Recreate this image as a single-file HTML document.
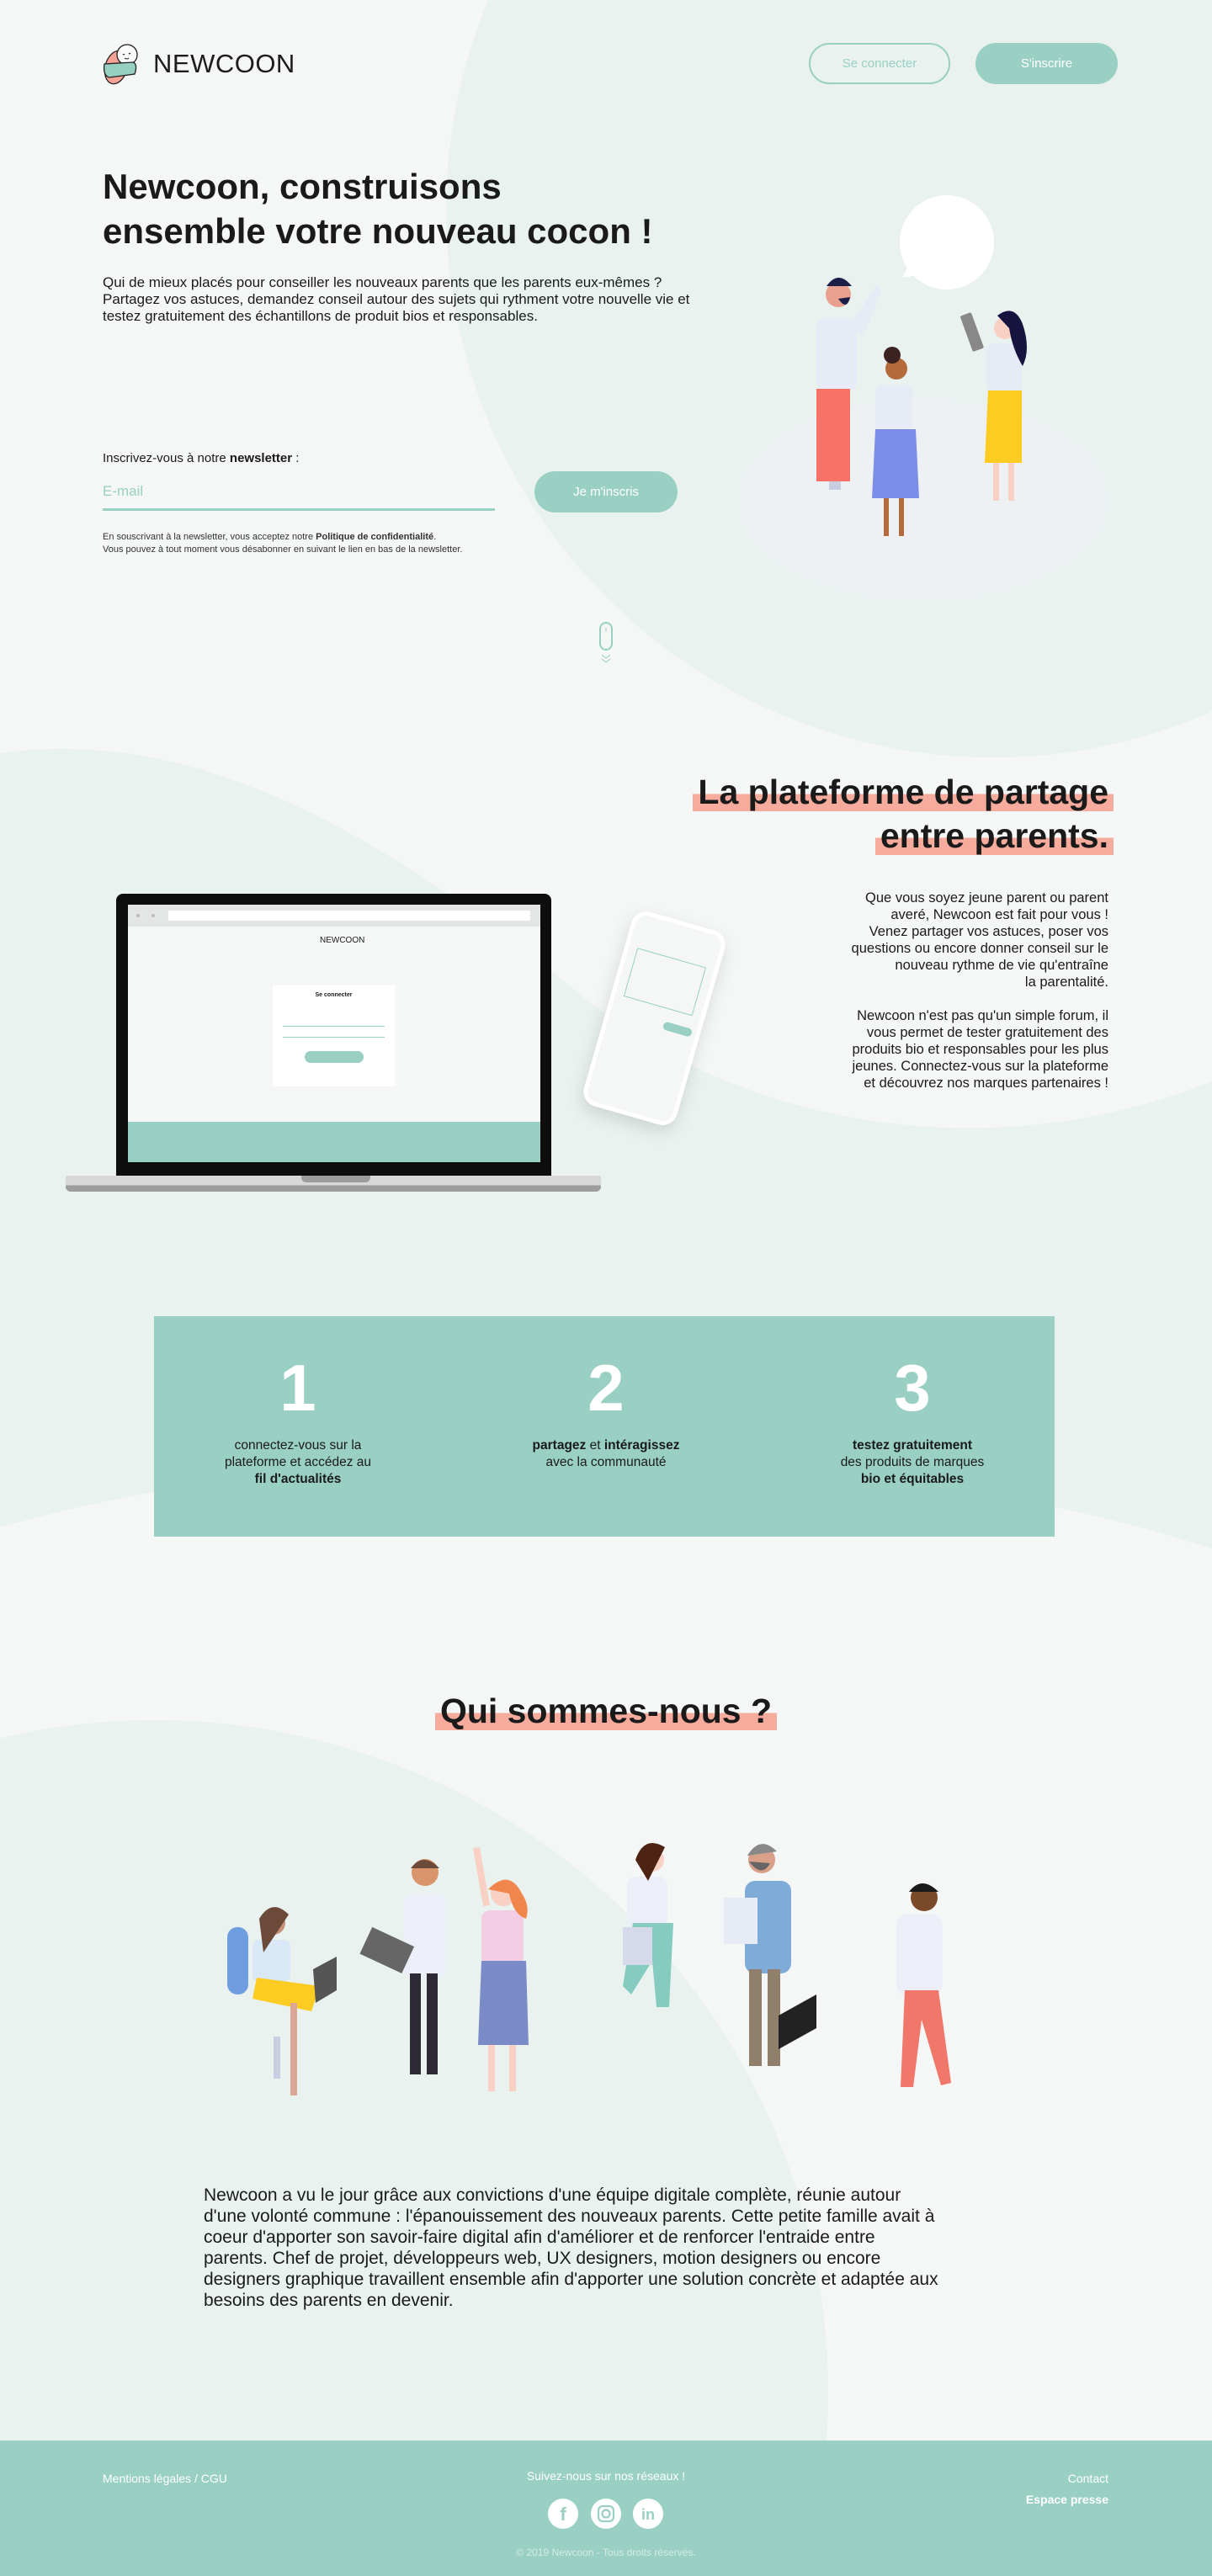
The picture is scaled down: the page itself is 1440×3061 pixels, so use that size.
<!DOCTYPE html>
<html><head><meta charset="utf-8"><style>
*{margin:0;padding:0;box-sizing:border-box}
html{overflow:hidden}
body{width:1440px;height:3061px;position:relative;background:#f4f7f6;font-family:"Liberation Sans",sans-serif;color:#1a1a1a;overflow:hidden}
.a{position:absolute}
.btn{position:absolute;border-radius:25px;display:flex;align-items:center;justify-content:center;font-size:15px}
.hl{background:linear-gradient(transparent 55%,#f6ab9c 55%,#f6ab9c 100%);padding:0 6px}
p{margin:0}
</style></head><body>
<svg class="a" style="left:0;top:0" width="1440" height="3061">
<circle cx="1180" cy="250" r="650" fill="#e9f2ee"/>
<path d="M0,895 C250,860 480,1010 700,1190 C860,1320 1150,1400 1440,1285 L1440,1840 C1000,1700 400,1700 0,1815 Z" fill="#e9f2ee"/>
<circle cx="184" cy="2844" r="800" fill="#e9f2ee"/>
</svg>

<!-- header -->
<svg class="a" style="left:120px;top:50px" width="52" height="52" viewBox="0 0 52 52">
<ellipse cx="18" cy="30" rx="13" ry="20" fill="#f4a396" stroke="#222" stroke-width="1.3" transform="rotate(15 18 30)"/>
<circle cx="31" cy="15" r="12" fill="#fafafa" stroke="#222" stroke-width="1.3"/>
<path d="M26 14 q1 2 2 0 M33 13 q1 2 2 0 M28 19 q3 2 5 0" stroke="#222" fill="none" stroke-width="1"/>
<path d="M4 26 L38 24 Q44 26 40 38 L10 42 Q2 40 4 26Z" fill="#96d0c1" stroke="#222" stroke-width="1.3"/>
</svg>
<div class="a" style="left:182px;top:58px;font-size:31px;font-weight:500;letter-spacing:.5px;color:#1c1c1c">NEWCOON</div>
<div class="btn" style="left:961px;top:51px;width:168px;height:49px;border:2px solid #99d0c3;color:#99d0c3">Se connecter</div>
<div class="btn" style="left:1159px;top:51px;width:169px;height:49px;background:#99d0c3;color:#fff">S'inscrire</div>

<!-- hero -->
<div class="a" style="left:122px;top:195px;font-size:42px;font-weight:bold;line-height:53px">Newcoon, construisons<br>ensemble votre nouveau cocon !</div>
<div class="a" style="left:122px;top:326px;font-size:17px;line-height:20px;width:860px">Qui de mieux placés pour conseiller les nouveaux parents que les parents eux-mêmes ?<br>Partagez vos astuces, demandez conseil autour des sujets qui rythment votre nouvelle vie et<br>testez gratuitement des échantillons de produit bios et responsables.</div>
<div class="a" style="left:122px;top:536px;font-size:15px">Inscrivez-vous à notre <b>newsletter</b> :</div>
<div class="a" style="left:122px;top:574px;font-size:17px;color:#99d0c3">E-mail</div>
<div class="a" style="left:122px;top:604px;width:466px;height:3px;background:#99d0c3"></div>
<div class="btn" style="left:635px;top:560px;width:170px;height:49px;background:#99d0c3;color:#fff">Je m'inscris</div>
<div class="a" style="left:122px;top:631px;font-size:11px;line-height:15px;color:#333">En souscrivant à la newsletter, vous acceptez notre <b>Politique de confidentialité</b>.<br>Vous pouvez à tout moment vous désabonner en suivant le lien en bas de la newsletter.</div>
<svg class="a" style="left:706px;top:738px" width="28" height="56"><rect x="7" y="2" width="14" height="32" rx="7" fill="none" stroke="#99d0c3" stroke-width="2"/><line x1="14" y1="8" x2="14" y2="13" stroke="#99d0c3"/><path d="M9 40 l5 4 l5 -4 M9 45 l5 4 l5 -4" stroke="#99d0c3" fill="none"/></svg>

<!-- hero illustration -->
<svg class="a" style="left:860px;top:230px" width="480" height="500" viewBox="860 230 480 500">
<ellipse cx="1097" cy="594" rx="220" ry="120" fill="#edf1f4"/>
<circle cx="1125" cy="288" r="56" fill="#fff"/><path d="M1072 330 L1085 305 L1100 325Z" fill="#fff"/>
<rect x="970" y="377" width="48" height="88" rx="12" fill="#e6ebf5"/>
<path d="M1012 385 L1040 340 L1048 345 L1025 400Z" fill="#e6ebf5"/>
<rect x="970" y="462" width="40" height="110" fill="#f87365"/>
<rect x="985" y="572" width="14" height="10" fill="#c8cde0"/>
<circle cx="996" cy="350" r="15" fill="#e9a08f"/><path d="M982 340 q14 -20 30 0 z" fill="#1d1d4a"/><path d="M996 355 q10 15 14 -2 z" fill="#1d1d4a"/>
<rect x="1040" y="457" width="44" height="58" rx="10" fill="#e6ebf5"/>
<path d="M1040 510 L1088 510 L1092 592 L1036 592Z" fill="#7b8ee8"/>
<rect x="1050" y="592" width="6" height="45" fill="#b46a3a"/><rect x="1068" y="592" width="6" height="45" fill="#b46a3a"/>
<circle cx="1065" cy="438" r="13" fill="#b46a3a"/><circle cx="1060" cy="422" r="10" fill="#3d2222"/>
<rect x="1172" y="408" width="42" height="60" rx="10" fill="#e6ebf5"/>
<path d="M1174 464 L1214 464 L1214 550 L1170 550Z" fill="#fdcc22"/>
<rect x="1180" y="550" width="7" height="45" fill="#f8d0c4"/><rect x="1198" y="550" width="7" height="45" fill="#f8d0c4"/>
<circle cx="1194" cy="390" r="13" fill="#f8d0c4"/><path d="M1185 375 q20 -15 30 10 q10 30 0 50 q-12 -20 -16 -45 z" fill="#16143f"/>
<rect x="1148" y="372" width="14" height="45" rx="2" fill="#888" transform="rotate(-20 1155 395)"/>
</svg>

<!-- section 2 -->
<div class="a" style="right:117px;top:915px;font-size:41px;font-weight:bold;line-height:52px;text-align:right;width:700px"><span class="hl">La plateforme de partage</span><br><span class="hl">entre parents.</span></div>
<div class="a" style="right:123px;top:1057px;width:420px;text-align:right;font-size:16.5px;line-height:20px">Que vous soyez jeune parent ou parent<br>averé, Newcoon est fait pour vous !<br>Venez partager vos astuces, poser vos<br>questions ou encore donner conseil sur le<br>nouveau rythme de vie qu'entraîne<br>la parentalité.<br><br>Newcoon n'est pas qu'un simple forum, il<br>vous permet de tester gratuitement des<br>produits bio et responsables pour les plus<br>jeunes. Connectez-vous sur la plateforme<br>et découvrez nos marques partenaires !</div>

<!-- laptop -->
<div class="a" style="left:138px;top:1062px;width:517px;height:336px;background:#0d0d0d;border-radius:8px 8px 0 0"></div>
<div class="a" style="left:152px;top:1075px;width:490px;height:306px;background:#f4f7f6"></div>
<div class="a" style="left:152px;top:1075px;width:490px;height:26px;background:#e4e6e6"></div>
<div class="a" style="left:200px;top:1082px;width:430px;height:12px;background:#fff"></div>
<div class="a" style="left:162px;top:1086px;width:22px;height:4px;border-left:4px dotted #bbb;border-right:4px dotted #bbb"></div>
<div class="a" style="left:380px;top:1112px;font-size:10px">NEWCOON</div>
<div class="a" style="left:324px;top:1171px;width:145px;height:120px;background:#fff;font-size:7px;text-align:center;padding-top:8px"><b>Se connecter</b>
<div style="margin:25px 12px 0;border-bottom:1px solid #99d0c3;height:9px"></div><div style="margin:12px 12px 0;border-bottom:1px solid #99d0c3;height:0"></div>
<div style="margin:16px auto 0;width:70px;height:14px;background:#99d0c3;border-radius:7px"></div></div>
<div class="a" style="left:152px;top:1333px;width:490px;height:48px;background:#99d0c3"></div>
<div class="a" style="left:78px;top:1397px;width:636px;height:19px;background:linear-gradient(#d8d8d8 60%,#9c9c9c 60%);border-radius:0 0 6px 6px"></div>
<div class="a" style="left:358px;top:1397px;width:82px;height:8px;background:#9c9c9c;border-radius:0 0 6px 6px"></div>
<div class="a" style="left:720px;top:1090px;width:115px;height:240px;border:5px solid #fff;border-radius:18px;background:#f4f7f6;transform:rotate(16deg);box-shadow:0 8px 20px rgba(0,0,0,.12)">
<div style="margin:40px 10px 0;height:60px;border:1px solid #99d0c3"></div>
<div style="margin:15px 0 0 65px;width:35px;height:10px;background:#99d0c3;border-radius:5px"></div></div>

<!-- steps -->
<div class="a" style="left:183px;top:1564px;width:1070px;height:262px;background:#99d0c3"></div>
<div class="a" style="left:204px;top:1604px;width:300px;text-align:center">
<div style="font-size:78px;font-weight:bold;color:#fff;line-height:90px">1</div><div style="font-size:15.5px;line-height:20px;margin-top:14px">connectez-vous sur la<br>plateforme et accédez au<br><b>fil d'actualités</b></div></div>
<div class="a" style="left:570px;top:1604px;width:300px;text-align:center">
<div style="font-size:78px;font-weight:bold;color:#fff;line-height:90px">2</div><div style="font-size:15.5px;line-height:20px;margin-top:14px"><b>partagez</b> et <b>intéragissez</b><br>avec la communauté</div></div>
<div class="a" style="left:934px;top:1604px;width:300px;text-align:center">
<div style="font-size:78px;font-weight:bold;color:#fff;line-height:90px">3</div><div style="font-size:15.5px;line-height:20px;margin-top:14px"><b>testez gratuitement</b><br>des produits de marques<br><b>bio et équitables</b></div></div>

<!-- qui sommes nous -->
<div class="a" style="left:0;top:2007px;width:1440px;text-align:center;font-size:41px;font-weight:bold;line-height:52px"><span class="hl">Qui sommes-nous ?</span></div>
<svg class="a" style="left:260px;top:2170px" width="930" height="340" viewBox="260 2170 930 340">
<rect x="270" y="2290" width="25" height="80" rx="12" fill="#6f9ee0"/><rect x="300" y="2305" width="45" height="50" rx="8" fill="#d9e8f7"/><path d="M305 2350 L380 2360 L370 2390 L300 2375Z" fill="#fdcc22"/><rect x="325" y="2420" width="8" height="50" fill="#c8cde0"/><rect x="345" y="2380" width="8" height="110" fill="#dba895"/><circle cx="325" cy="2285" r="14" fill="#c9907b"/><path d="M308 2280 q15 -25 35 -5 l-30 45z" fill="#6b4a3a"/><path d="M372 2340 L400 2325 L400 2365 L375 2380Z" fill="#555"/>
<rect x="480" y="2250" width="50" height="100" rx="10" fill="#eceff8"/><rect x="487" y="2345" width="13" height="120" fill="#2d2a36"/><rect x="507" y="2345" width="13" height="120" fill="#2d2a36"/><circle cx="505" cy="2225" r="16" fill="#d9956b"/><path d="M488 2220 q15 -20 34 0z" fill="#6b4a3a"/><rect x="432" y="2300" width="55" height="35" fill="#666" transform="rotate(25 460 2318)"/>
<rect x="572" y="2270" width="50" height="65" rx="10" fill="#f3cde3"/><path d="M572 2330 L625 2330 L628 2430 L568 2430Z" fill="#7b8bc7"/><rect x="580" y="2430" width="8" height="55" fill="#f8d0c4"/><rect x="605" y="2430" width="8" height="55" fill="#f8d0c4"/><circle cx="598" cy="2250" r="15" fill="#f8d0c4"/><path d="M580 2245 q25 -25 40 5 q10 15 5 30 q-15 -5 -20 -30z" fill="#f0864c"/><rect x="568" y="2195" width="8" height="70" fill="#f8d0c4" transform="rotate(-10 572 2230)"/>
<rect x="745" y="2230" width="48" height="60" rx="10" fill="#eceff8"/><path d="M752 2285 L800 2285 L795 2385 L780 2385 L775 2330 L750 2370 L740 2360Z" fill="#86cbbf"/><circle cx="775" cy="2210" r="14" fill="#f8d0c4"/><path d="M755 2210 q10 -30 35 -15 l-20 40z" fill="#4d2414"/><rect x="740" y="2290" width="35" height="45" fill="#d5d9ea"/>
<rect x="885" y="2235" width="55" height="110" rx="12" fill="#7fabd9"/><rect x="890" y="2340" width="15" height="115" fill="#8f7f6b"/><rect x="912" y="2340" width="15" height="115" fill="#8f7f6b"/><circle cx="905" cy="2210" r="16" fill="#d9a08a"/><path d="M888 2205 q15 -25 35 -5z" fill="#888"/><path d="M890 2212 q15 20 25 2z" fill="#666"/><rect x="860" y="2255" width="40" height="55" fill="#e6ebf5"/><path d="M925 2395 L970 2370 L970 2410 L925 2435Z" fill="#222"/>
<rect x="1065" y="2275" width="55" height="95" rx="12" fill="#eceff8"/><path d="M1075 2365 L1115 2365 L1130 2475 L1118 2478 L1095 2400 L1085 2480 L1070 2480Z" fill="#f1776b"/><circle cx="1098" cy="2255" r="16" fill="#7a4a2a"/><path d="M1080 2248 q15 -20 35 0z" fill="#1a1a1a"/>
</svg>
<div class="a" style="left:242px;top:2596px;font-size:21px;line-height:25px;width:1000px">Newcoon a vu le jour grâce aux convictions d'une équipe digitale complète, réunie autour<br>d'une volonté commune : l'épanouissement des nouveaux parents. Cette petite famille avait à<br>coeur d'apporter son savoir-faire digital afin d'améliorer et de renforcer l'entraide entre<br>parents. Chef de projet, développeurs web, UX designers, motion designers ou encore<br>designers graphique travaillent ensemble afin d'apporter une solution concrète et adaptée aux<br>besoins des parents en devenir.</div>

<!-- footer -->
<div class="a" style="left:0;top:2900px;width:1440px;height:161px;background:#99d0c3"></div>
<div class="a" style="left:122px;top:2937px;font-size:14px;color:#fff">Mentions légales / CGU</div>
<div class="a" style="left:0;top:2934px;width:1440px;text-align:center;font-size:14px;color:#fff">Suivez-nous sur nos réseaux !</div>
<div class="a" style="right:123px;top:2937px;font-size:14px;color:#fff">Contact</div>
<div class="a" style="right:123px;top:2962px;font-size:14px;color:#fff;font-weight:bold">Espace presse</div>
<svg class="a" style="left:650px;top:2968px" width="140" height="38">
<circle cx="19" cy="19" r="18" fill="#fff"/><text x="19" y="27" text-anchor="middle" font-family="Liberation Sans" font-weight="bold" font-size="22" fill="#99d0c3">f</text>
<circle cx="70" cy="19" r="18" fill="#fff"/><rect x="61" y="10" width="18" height="18" rx="5" fill="none" stroke="#99d0c3" stroke-width="2.2"/><circle cx="70" cy="19" r="4.5" fill="none" stroke="#99d0c3" stroke-width="2.2"/>
<circle cx="120" cy="19" r="18" fill="#fff"/><text x="120" y="26" text-anchor="middle" font-family="Liberation Sans" font-weight="bold" font-size="18" fill="#99d0c3">in</text>
</svg>
<div class="a" style="left:0;top:3026px;width:1440px;text-align:center;font-size:12px;color:#d4ece6">© 2019 Newcoon - Tous droits réservés.</div>
</body></html>
